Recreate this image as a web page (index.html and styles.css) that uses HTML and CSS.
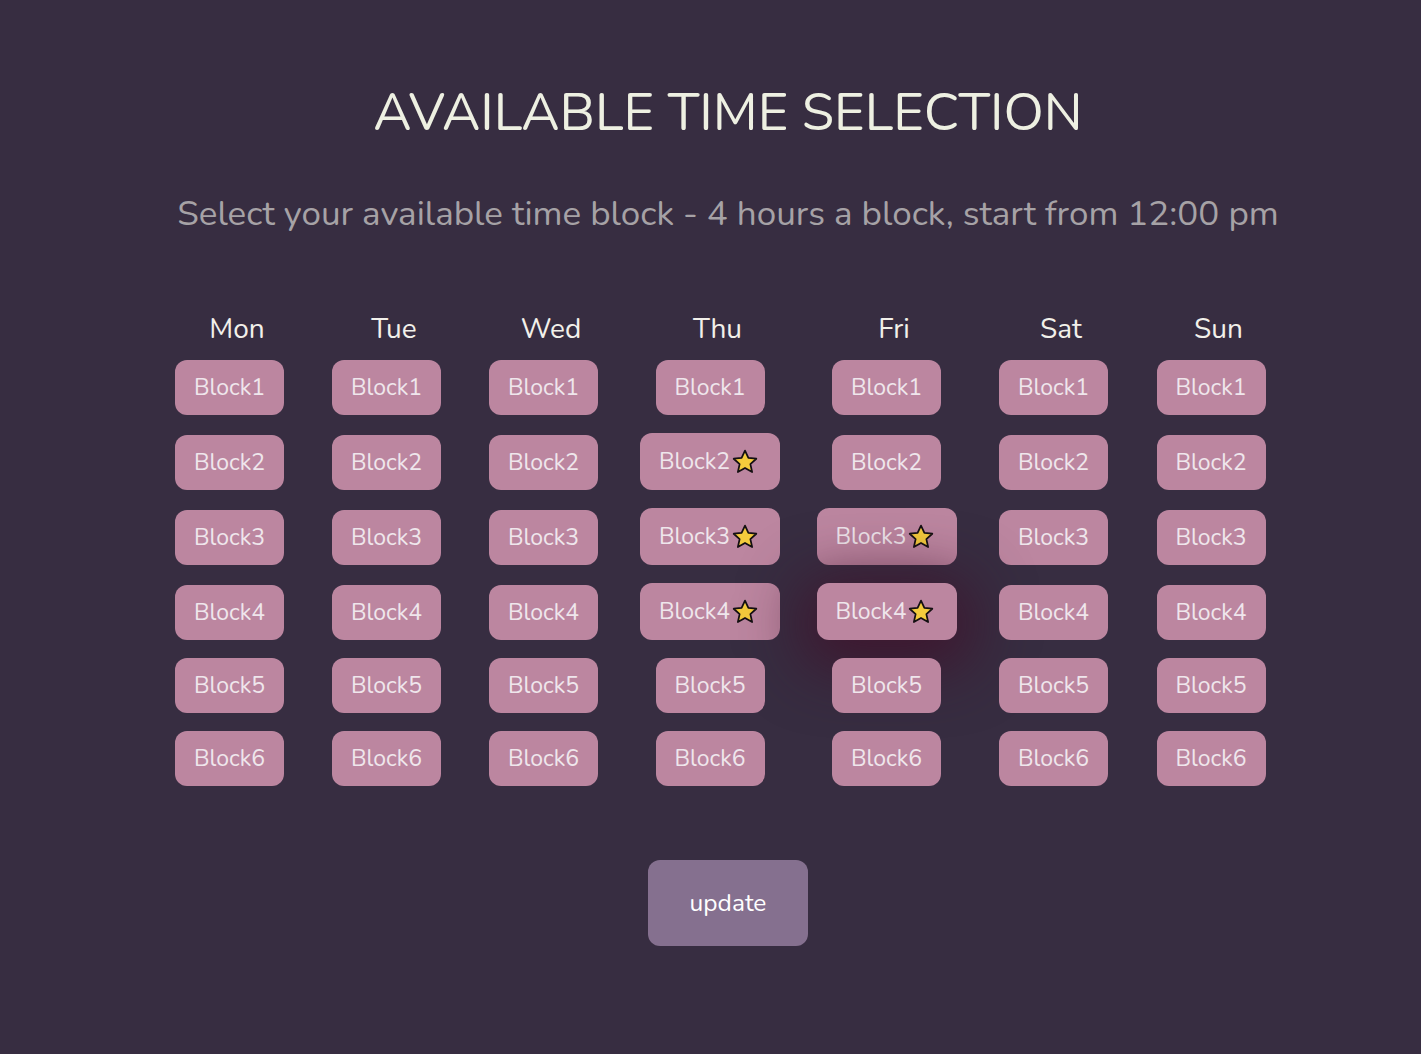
FILE: index.html
```html
<!DOCTYPE html>
<html lang="en">
<head>
<meta charset="utf-8">
<title>Available Time Selection</title>
<link rel="stylesheet" href="styles.css">
</head>
<body>
<main class="page">
  <h1 class="title">AVAILABLE TIME SELECTION</h1>
  <p class="subtitle">Select your available time block - 4 hours a block, start from 12:00 pm</p>

  <div class="schedule">
    <div class="day">Mon</div><div class="day">Tue</div><div class="day">Wed</div><div class="day">Thu</div><div class="day">Fri</div><div class="day">Sat</div><div class="day">Sun</div>

    <button class="block">Block1</button><button class="block">Block1</button><button class="block">Block1</button><button class="block">Block1</button><button class="block">Block1</button><button class="block">Block1</button><button class="block">Block1</button>

    <button class="block">Block2</button><button class="block">Block2</button><button class="block">Block2</button>
    <button class="block starred">Block2<svg class="star" viewBox="0 0 24 24"><path d="M12 2.2l2.9 6.3 6.8.7-5.1 4.6 1.5 6.8L12 17.1l-6.1 3.5 1.5-6.8-5.1-4.6 6.8-.7z"/></svg></button>
    <button class="block">Block2</button><button class="block">Block2</button><button class="block">Block2</button>

    <button class="block">Block3</button><button class="block">Block3</button><button class="block">Block3</button>
    <button class="block starred">Block3<svg class="star" viewBox="0 0 24 24"><path d="M12 2.2l2.9 6.3 6.8.7-5.1 4.6 1.5 6.8L12 17.1l-6.1 3.5 1.5-6.8-5.1-4.6 6.8-.7z"/></svg></button>
    <button class="block starred">Block3<svg class="star" viewBox="0 0 24 24"><path d="M12 2.2l2.9 6.3 6.8.7-5.1 4.6 1.5 6.8L12 17.1l-6.1 3.5 1.5-6.8-5.1-4.6 6.8-.7z"/></svg></button>
    <button class="block">Block3</button><button class="block">Block3</button>

    <button class="block">Block4</button><button class="block">Block4</button><button class="block">Block4</button>
    <button class="block starred">Block4<svg class="star" viewBox="0 0 24 24"><path d="M12 2.2l2.9 6.3 6.8.7-5.1 4.6 1.5 6.8L12 17.1l-6.1 3.5 1.5-6.8-5.1-4.6 6.8-.7z"/></svg></button>
    <button class="block starred hovered">Block4<svg class="star" viewBox="0 0 24 24"><path d="M12 2.2l2.9 6.3 6.8.7-5.1 4.6 1.5 6.8L12 17.1l-6.1 3.5 1.5-6.8-5.1-4.6 6.8-.7z"/></svg></button>
    <button class="block">Block4</button><button class="block">Block4</button>

    <button class="block">Block5</button><button class="block">Block5</button><button class="block">Block5</button><button class="block">Block5</button><button class="block">Block5</button><button class="block">Block5</button><button class="block">Block5</button>

    <button class="block">Block6</button><button class="block">Block6</button><button class="block">Block6</button><button class="block">Block6</button><button class="block">Block6</button><button class="block">Block6</button><button class="block">Block6</button>
  </div>

  <button class="update">update</button>
</main>
</body>
</html>
```

FILE: styles.css
```css
html, body {
  margin: 0;
  background: #372d41;
}

.page {
  box-sizing: border-box;
  min-height: 1054px;
  padding: 81px 0 0 35px;
  display: flex;
  flex-direction: column;
  align-items: center;
  font-family: "Nunito", "Noto Sans", "Open Sans", sans-serif;
}

.title {
  margin: 0;
  font-size: 52.5px;
  line-height: 64px;
  font-weight: 400;
  color: #eef0e2;
}

.subtitle {
  margin: 48px 0 0;
  font-size: 35px;
  line-height: 42px;
  color: #a6a2a6;
}

.schedule {
  margin-top: 74px;
  display: grid;
  grid-template-columns: 157px 157px 157px 176px 177px 157px 158px;
  row-gap: 18px;
  align-items: end;
  justify-items: center;
}

.day {
  padding-top: 2px;
  font-size: 28px;
  line-height: 36px;
  color: #f2f0ea;
  margin-bottom: -5px;
}

.block {
  box-sizing: border-box;
  width: 109px;
  height: 55px;
  margin-right: 15px;
  padding: 0;
  border: none;
  border-radius: 12px;
  background: #bc86a0;
  color: #efe6ec;
  font-family: inherit;
  font-size: 23px;
  display: flex;
  align-items: center;
  justify-content: center;
}

.block.starred {
  width: 140px;
  height: 57px;
  padding-right: 2px;
}

.block.hovered {
  box-shadow: 0 12px 60px 16px rgba(64, 18, 42, 0.8);
}

.star {
  width: 28px;
  height: 28px;
  margin-left: 1px;
  fill: #f4cb3c;
  stroke: #141012;
  stroke-width: 1.5;
  stroke-linejoin: round;
}

.update {
  margin-top: 74px;
  width: 160px;
  height: 86px;
  border: none;
  border-radius: 12px;
  background: #85708f;
  color: #ffffff;
  font-family: inherit;
  font-size: 24.5px;
}
```
